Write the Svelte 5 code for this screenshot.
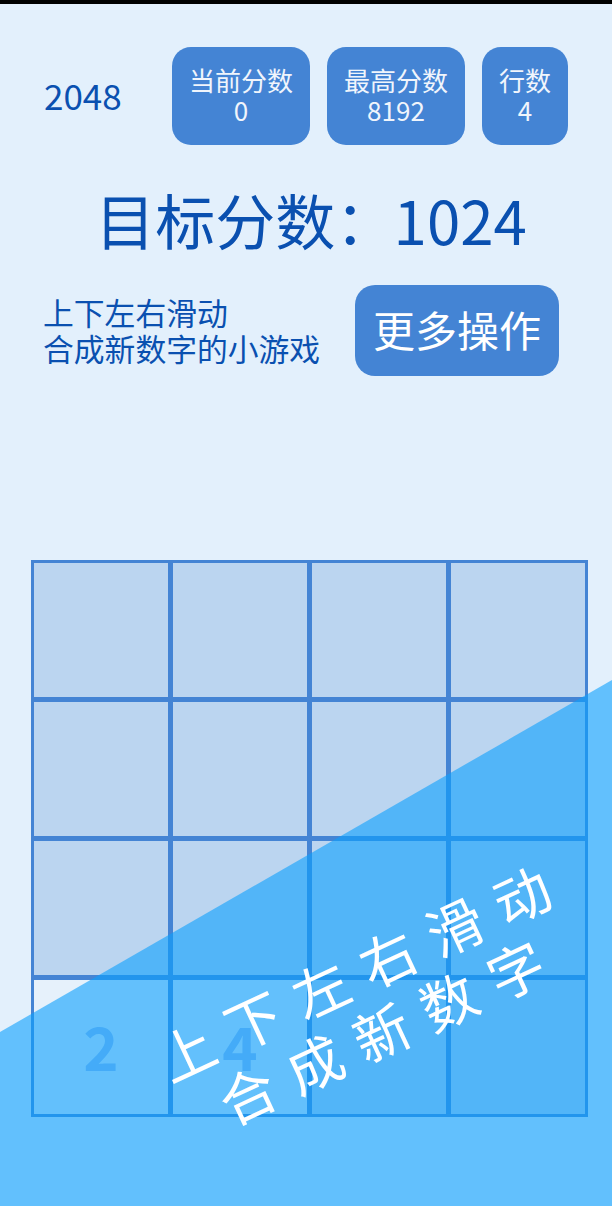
<script lang="ts">
interface Stat {
  label: string;
  value: number;
}

const stats: Stat[] = [
  { label: '当前分数', value: 0 },
  { label: '最高分数', value: 8192 },
  { label: '行数', value: 4 },
];

// row by row, 0 means an empty cell
const board: number[] = [0, 0, 0, 0, 0, 0, 0, 0, 0, 0, 0, 0, 2, 4, 0, 0];
</script>

<div class="page">
  <div class="status-bar"></div>

  <header class="top-row">
    <span class="game-name">2048</span>
    <div class="stats">
      {#each stats as stat}
        <div class="stat-card">
          <span>{stat.label}</span>
          <span>{stat.value}</span>
        </div>
      {/each}
    </div>
  </header>

  <h1 class="target">目标分数： 1024</h1>

  <section class="intro">
    <p>上下左右滑动<br />合成新数字的小游戏</p>
    <button class="more-button">更多操作</button>
  </section>

  <div class="board">
    {#each board as cell}
      <div class="cell" class:filled={cell > 0}>{cell > 0 ? cell : ''}</div>
    {/each}
  </div>

  <div class="guide">
    <div class="guide-shape"></div>
    <div class="guide-text">上下左右滑动<br />合成新数字</div>
  </div>
</div>

<style>
:global(body) {
  margin: 0;
}

.page {
  position: relative;
  width: 612px;
  height: 1206px;
  overflow: hidden;
  background-color: #e3f0fc;
  color: #0a50b0;
  font-family: "Noto Sans CJK SC", "Noto Sans", sans-serif;
}

.status-bar {
  height: 4px;
  background-color: #000;
}

.top-row {
  display: flex;
  align-items: center;
  justify-content: space-between;
  margin-top: 43px;
  padding: 0 44px;
}

.game-name {
  padding-bottom: 2px;
  font-size: 35px;
  line-height: 96px;
}

.stats {
  display: flex;
  gap: 17px;
}

.stat-card {
  display: flex;
  flex-direction: column;
  align-items: center;
  justify-content: center;
  height: 98px;
  padding: 0 17px 2px;
  box-sizing: border-box;
  border-radius: 19px;
  background-color: #4484d4;
  color: #f0f5fc;
  font-size: 26px;
  line-height: 30px;
}

.target {
  margin: 34px 0 0;
  padding-left: 10px;
  font-size: 60px;
  font-weight: 400;
  line-height: 80px;
  text-align: center;
  white-space: pre;
  word-spacing: -15px;
}

.intro {
  display: flex;
  align-items: center;
  justify-content: space-between;
  margin-top: 26px;
  padding: 0 53px 0 43px;
}

.intro p {
  margin: 0;
  padding-bottom: 2px;
  font-size: 30.8px;
  line-height: 36px;
}

.more-button {
  width: 204px;
  height: 91px;
  padding: 0 0 4px;
  border: none;
  border-radius: 20px;
  background-color: #4484d4;
  color: #fff;
  font-family: inherit;
  font-size: 42px;
}

.board {
  display: grid;
  grid-template-columns: repeat(4, 134px);
  grid-auto-rows: 134px;
  gap: 5px;
  width: max-content;
  margin: 184px 0 0 31px;
  padding: 3px;
  background-color: #4484d4;
}

.cell {
  display: flex;
  align-items: center;
  justify-content: center;
  padding-bottom: 5px;
  box-sizing: border-box;
  background-color: #bbd5f0;
  color: #98bcf0;
  font-size: 60px;
  font-weight: 700;
}

.cell.filled {
  background-color: #e6f1fb;
}

.guide {
  position: absolute;
  inset: 0;
}

.guide-shape {
  position: absolute;
  inset: 0;
  background-color: rgba(12, 160, 253, 0.6);
  clip-path: polygon(612px 680px, 612px 1206px, 0 1206px, 0 1032px);
}

.guide-text {
  position: absolute;
  left: 375px;
  top: 997px;
  width: 500px;
  color: #fff;
  font-size: 56px;
  letter-spacing: 18px;
  line-height: 65px;
  text-align: center;
  white-space: nowrap;
  transform: translate(-50%, -50%) rotate(-25deg);
}
</style>
